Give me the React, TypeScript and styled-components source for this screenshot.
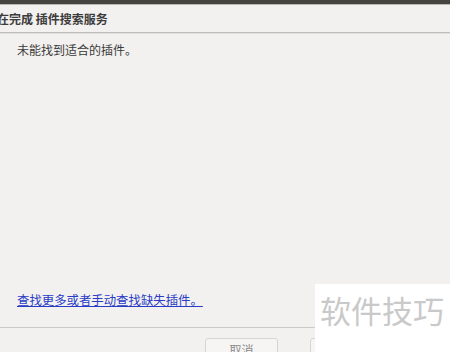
import styled, { createGlobalStyle } from 'styled-components';

const GlobalStyle = createGlobalStyle`
  html, body {
    margin: 0;
    padding: 0;
    background: #f2f1ef;
  }
  * {
    box-sizing: border-box;
  }
`;

export default function App() {
  return (
    <>
      <GlobalStyle />
      <Window>
        <TopEdge />
        <TitleBar>
          <Title>正在完成 插件搜索服务</Title>
        </TitleBar>
        <Body>
          <Message>未能找到适合的插件。</Message>
          <MoreLink href="#">查找更多或者手动查找缺失插件。</MoreLink>
        </Body>
        <Footer>
          <Button>取消</Button>
          <Button>关闭</Button>
        </Footer>
        <Watermark>软件技巧</Watermark>
      </Window>
    </>
  );
}

const Window = styled.div`
  position: relative;
  display: flex;
  flex-direction: column;
  width: 450px;
  height: 352px;
  overflow: hidden;
  background: #f2f1ef;
  font-family: 'Noto Sans CJK SC', 'DejaVu Sans', sans-serif;
`;

const TopEdge = styled.div`
  height: 5px;
  background: #46443f;
  border-bottom: 1px solid #b9b7b2;
`;

const TitleBar = styled.div`
  display: flex;
  align-items: center;
  height: 28px;
  border-bottom: 1px solid #bebdb9;
  box-shadow: 0 1px 0 #e0dfdc;
`;

const Title = styled.div`
  margin-left: -15px;
  font-size: 12px;
  font-weight: 700;
  color: #3c3c3c;
  white-space: nowrap;
`;

const Body = styled.div`
  display: flex;
  flex-direction: column;
  justify-content: space-between;
  flex: 1;
  padding: 8px 17px 18px;
  border-bottom: 1px solid #cbcac6;
`;

const Message = styled.div`
  font-size: 12px;
  color: #3a3a3a;
`;

const MoreLink = styled.a`
  font-size: 12.4px;
  color: #2a3cc6;
  text-decoration: underline;
`;

const Footer = styled.div`
  display: flex;
  gap: 32px;
  height: 24px;
  padding: 10px 0 0 205px;
`;

const Button = styled.div`
  width: 73px;
  height: 30px;
  padding-top: 2px;
  text-align: center;
  font-size: 12px;
  color: #8a8a8a;
  background: #f6f5f3;
  border: 1px solid #d6d5d1;
  border-radius: 3px;
`;

const Watermark = styled.div`
  position: absolute;
  left: 315px;
  top: 284px;
  width: 135px;
  height: 68px;
  padding: 6px 0 0 5px;
  background: #ffffff;
  font-size: 31px;
  line-height: 40px;
  color: #c9c9c9;
  white-space: nowrap;
`;
